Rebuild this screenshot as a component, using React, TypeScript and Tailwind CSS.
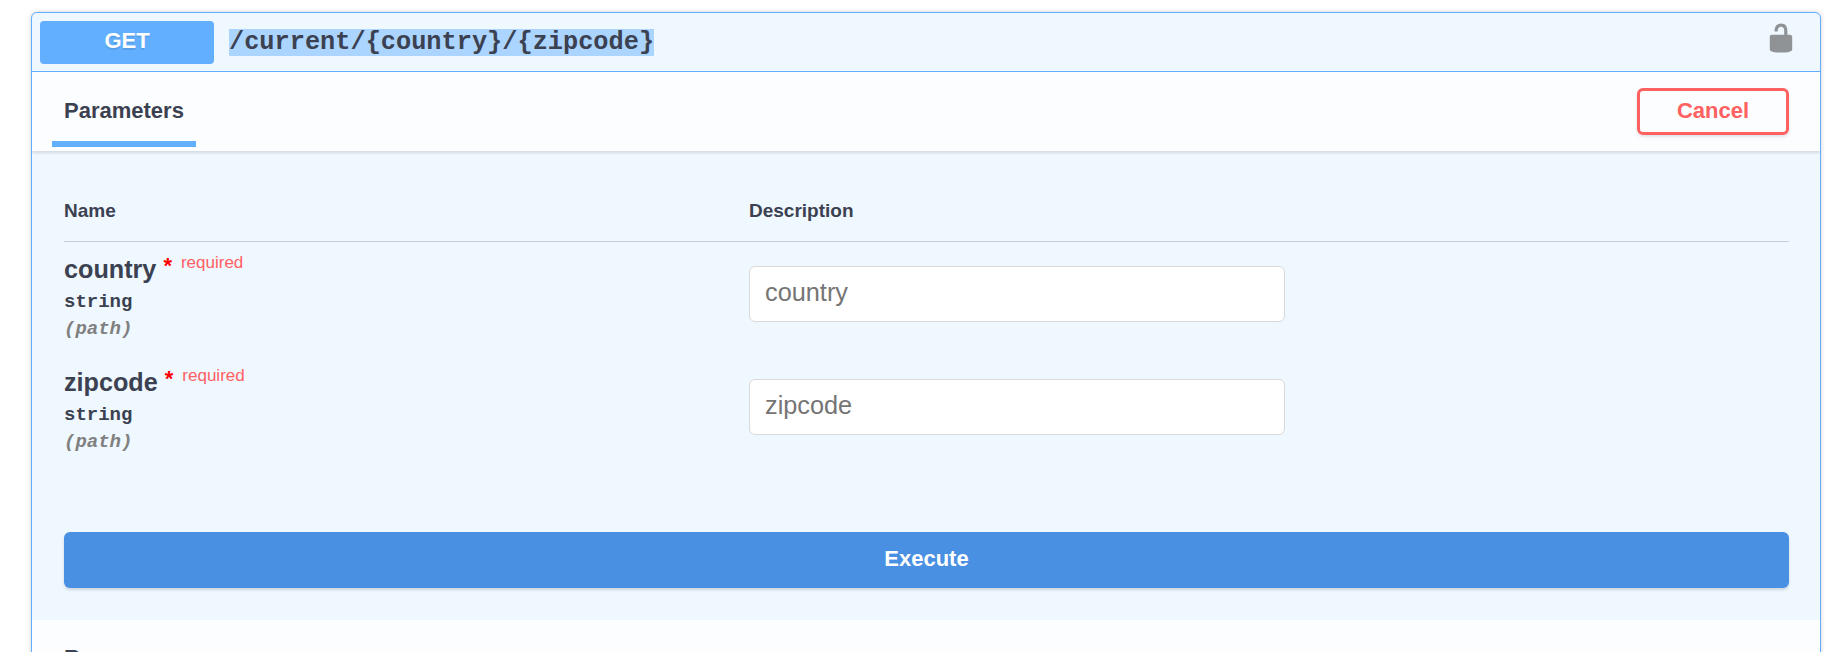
import React from "react";

const sans = "font-['Liberation_Sans',Arial,sans-serif]";
const mono = "font-['Liberation_Mono','Courier_New',monospace]";

function UnlockedIcon() {
  return (
    <svg width="32" height="32" viewBox="0 0 20 20" fill="#8f9396" aria-hidden="true">
      <path d="M15.8 8H14V5.6C14 2.703 12.665 1 10 1 7.334 1 6 2.703 6 5.6V6h2v-.801C8 3.754 8.797 3 10 3c1.203 0 2 .754 2 2.199V8H4c-.553 0-1 .646-1 1.199V17c0 .549.428 1.139.951 1.307l1.197.387C5.672 18.861 6.55 19 7.1 19h5.8c.549 0 1.428-.139 1.951-.307l1.196-.387c.524-.167.953-.757.953-1.306V9.199C17 8.646 16.352 8 15.8 8z" />
    </svg>
  );
}

function ParameterRow({ name }: { name: string }) {
  return (
    <div className="flex h-[113px] w-full">
      <div className="w-[685px] pt-[10px]">
        <div className="flex h-[34px] items-start">
          <span className="text-[25.2px] leading-[34px] font-bold">{name}</span>
          <span className="ml-[7px] pt-px text-[22px] leading-[26px] font-bold text-[#ff0000]">*</span>
          <span className="ml-[9px] pt-[1px] text-[17px] leading-[19px] text-[#ff6064]">required</span>
        </div>
        <div className={`${mono} h-[27px] text-[19px] leading-[32px] font-bold`}>string</div>
        <div className={`${mono} h-[27px] text-[19px] leading-[32px] font-bold italic text-[#808080]`}>(path)</div>
      </div>
      <div className="pt-[24px]">
        <input
          type="text"
          placeholder={name}
          className="block h-[56px] w-[536px] rounded-[6px] border border-[#d9d9d9] bg-white px-[15px] pb-[3px] text-[25.3px] outline-none placeholder:text-[#757575] placeholder:opacity-100"
        />
      </div>
    </div>
  );
}

export default function App() {
  return (
    <div className={`${sans} h-[652px] overflow-hidden bg-white pt-[12px] pr-[11px] pl-[31px] text-[#3b4151]`}>
      <section className="h-[700px] overflow-clip rounded-[6px] border border-[#61affe] bg-[#eff7ff] shadow-[0_0_5px_rgba(0,0,0,0.19)]">
        <header className="flex h-[59px] items-start border-b border-[#61affe] pt-[8px] pr-[23px] pl-[8px]">
          <span className="h-[43px] w-[174px] rounded-[4px] bg-[#61affe] text-center text-[22px] leading-[39px] font-bold text-white [text-shadow:0_2px_0_rgba(0,0,0,0.1)]">
            GET
          </span>
          <span className={`${mono} mt-[8px] ml-[15px] h-[27px] bg-[#abd4ff] text-[25.3px] leading-[27px] font-bold whitespace-pre`}>
            /current/{"{country}"}/{"{zipcode}"}
          </span>
          <button className="mt-px ml-auto" aria-label="Authorize">
            <UnlockedIcon />
          </button>
        </header>

        <div className="relative flex h-[79px] items-start justify-between bg-[#fcfdff] pr-[31px] pl-[20px] shadow-[0_2px_3px_rgba(0,0,0,0.12)]">
          <h4 className="h-[75px] w-[144px] border-b-[6px] border-[#61affe] pt-[25px] pl-[12px] text-[22px] leading-[28px] font-bold">
            Parameters
          </h4>
          <button className="mt-[16px] h-[47px] w-[152px] rounded-[6px] border-[3px] border-[#ff6060] pb-[1px] text-[22px] leading-[40px] font-bold text-[#ff6060] shadow-[0_2px_3px_rgba(0,0,0,0.1)]">
            Cancel
          </button>
        </div>

        <div className="h-[469px] pt-[46px] pr-[31px] pl-[32px]">
          <div className="flex h-[45px] border-b border-[#c7cddb] text-[19px] leading-[28px] font-bold">
            <div className="w-[685px]">Name</div>
            <div>Description</div>
          </div>
          <ParameterRow name="country" />
          <ParameterRow name="zipcode" />
          <button className="mt-[64px] block h-[56px] w-full rounded-[6px] bg-[#4990e2] pb-[2px] text-[22px] leading-[50px] font-bold text-white shadow-[0_2px_3px_rgba(0,0,0,0.14)]">
            Execute
          </button>
        </div>

        <div className="h-[80px] bg-[#fcfdff] pt-[23px] pl-[32px] text-[22px] leading-[30px] font-bold">Responses</div>
      </section>
    </div>
  );
}
